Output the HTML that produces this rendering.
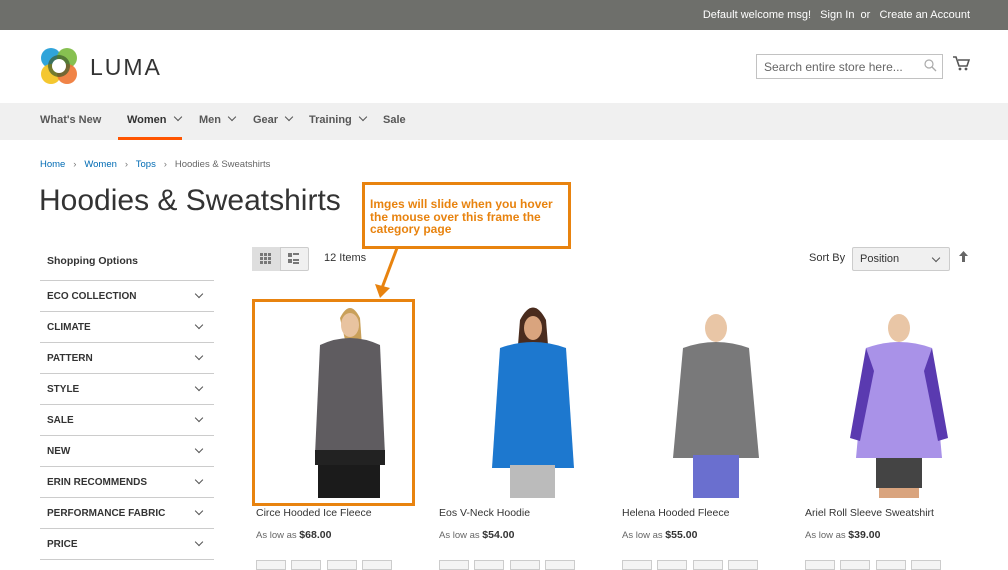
<!DOCTYPE html>
<html><head><meta charset="utf-8"><style>
*{margin:0;padding:0;box-sizing:border-box}
body{width:1008px;height:564px;overflow:hidden;background:#fff;font-family:"Liberation Sans",sans-serif;color:#333;position:relative}
.a{position:absolute;white-space:nowrap}
.top{left:0;top:0;width:1008px;height:30px;background:#6e6f6b}
.nav{left:0;top:103px;width:1008px;height:37px;background:#f0f0f0}
.nv{top:114px;font-size:11px;font-weight:bold;color:#575757}
.chev{display:inline-block;width:6px;height:6px;border-right:1.3px solid #555;border-bottom:1.3px solid #555;transform:rotate(45deg);margin-left:8px;position:relative;top:-3px}
.fl{left:40px;width:174px;height:31px;border-top:1px solid #ccc;font-size:10px;font-weight:bold;padding:10px 0 0 7px;color:#333}
.fl .chev{position:absolute;right:12px;top:10px}
.pn{font-size:10.5px;color:#333}
.pr{font-size:9.5px;color:#666}
.pr b{font-size:10.5px;color:#333}
.sw{top:560px;width:30px;height:10px;border:1px solid #ccc;background:#f4f4f4}
</style></head><body>
<div class="a top"></div>
<div class="a" style="right:38px;top:9px;font-size:11px;color:#fff">Default welcome msg! &nbsp;&nbsp;Sign In &nbsp;or &nbsp;&nbsp;Create an Account</div>
<svg class="a" style="left:40px;top:47px" width="38" height="38" viewBox="0 0 38 38">
<circle cx="11" cy="11" r="10" fill="#1a9ad6" opacity=".9"/><circle cx="27" cy="11" r="10" fill="#7ab93e" opacity=".9"/>
<circle cx="11" cy="27" r="10" fill="#f3c11a" opacity=".9"/><circle cx="27" cy="27" r="10" fill="#ee7633" opacity=".9"/>
<circle cx="19" cy="19" r="11" fill="#3e5b2c" opacity=".7"/><circle cx="19" cy="19" r="7" fill="#fff"/></svg>
<div class="a" style="left:90px;top:54px;font-size:23px;letter-spacing:2px;color:#333">LUMA</div>
<div class="a" style="left:756px;top:54px;width:187px;height:25px;border:1px solid #c2c2c2;font-size:12px;color:#666;padding:5px 0 0 7px">Search entire store here...</div>
<svg class="a" style="left:924px;top:59px" width="13" height="13"><circle cx="5" cy="5" r="4" stroke="#aaa" fill="none" stroke-width="1.2"/><line x1="8" y1="8" x2="12" y2="12" stroke="#aaa" stroke-width="1.3"/></svg>
<svg class="a" style="left:953px;top:56px" width="17" height="15" viewBox="0 0 17 15"><path d="M0 1h3l3 9h8l2-6H5" stroke="#555" fill="none" stroke-width="1.6"/><circle cx="7" cy="13" r="1.4" fill="#555"/><circle cx="13" cy="13" r="1.4" fill="#555"/></svg>
<div class="a nav"></div>
<div class="a nv" style="left:40px">What's New</div>
<div class="a nv" style="left:127px;color:#333">Women<span class="chev"></span></div>
<div class="a" style="left:118px;top:137px;width:64px;height:3px;background:#ff5501"></div>
<div class="a nv" style="left:199px">Men<span class="chev"></span></div>
<div class="a nv" style="left:253px">Gear<span class="chev"></span></div>
<div class="a nv" style="left:309px">Training<span class="chev"></span></div>
<div class="a nv" style="left:383px">Sale</div>
<div class="a" style="left:40px;top:159px;font-size:9.5px;color:#006bb4">Home &nbsp;&nbsp;<span style="color:#777">›</span>&nbsp;&nbsp; Women &nbsp;&nbsp;<span style="color:#777">›</span>&nbsp;&nbsp; Tops &nbsp;&nbsp;<span style="color:#777">›</span>&nbsp;&nbsp; <span style="color:#666">Hoodies &amp; Sweatshirts</span></div>
<div class="a" style="left:39px;top:184px;font-size:30px;color:#333;font-weight:300">Hoodies &amp; Sweatshirts</div>
<div class="a" style="left:362px;top:182px;width:209px;height:67px;border:3px solid #e8830f;background:#fff"></div>
<div class="a" style="left:370px;top:198px;font-size:12px;font-weight:bold;color:#e8830f;line-height:12.5px;white-space:normal;width:195px">Imges will slide when you hover the mouse over this frame the category page</div>
<svg class="a" style="left:370px;top:248px" width="35" height="52"><line x1="27" y1="0" x2="12" y2="40" stroke="#e8830f" stroke-width="3"/><path d="M5 36 L10 50 L20 40 Z" fill="#e8830f"/></svg>
<div class="a" style="left:47px;top:255px;font-size:10.5px;font-weight:bold">Shopping Options</div>
<div class="a fl" style="top:280px">ECO COLLECTION<span class="chev"></span></div>
<div class="a fl" style="top:311px">CLIMATE<span class="chev"></span></div>
<div class="a fl" style="top:342px">PATTERN<span class="chev"></span></div>
<div class="a fl" style="top:373px">STYLE<span class="chev"></span></div>
<div class="a fl" style="top:404px">SALE<span class="chev"></span></div>
<div class="a fl" style="top:435px">NEW<span class="chev"></span></div>
<div class="a fl" style="top:466px">ERIN RECOMMENDS<span class="chev"></span></div>
<div class="a fl" style="top:497px">PERFORMANCE FABRIC<span class="chev"></span></div>
<div class="a fl" style="top:528px;height:32px;border-bottom:1px solid #ccc">PRICE<span class="chev"></span></div>
<div class="a" style="left:252px;top:247px;width:57px;height:24px;border:1px solid #ccc;background:#f0f0f0;border-radius:2px"></div>
<div class="a" style="left:252px;top:247px;width:29px;height:24px;background:#dedede;border-right:1px solid #ccc"></div>
<svg class="a" style="left:260px;top:253px" width="40" height="12"><g fill="#777"><rect x="0" y="0" width="3" height="3"/><rect x="4" y="0" width="3" height="3"/><rect x="8" y="0" width="3" height="3"/><rect x="0" y="4" width="3" height="3"/><rect x="4" y="4" width="3" height="3"/><rect x="8" y="4" width="3" height="3"/><rect x="0" y="8" width="3" height="3"/><rect x="4" y="8" width="3" height="3"/><rect x="8" y="8" width="3" height="3"/><rect x="28" y="0" width="4" height="4"/><rect x="33" y="0" width="6" height="2"/><rect x="28" y="6" width="4" height="4"/><rect x="33" y="6" width="6" height="2"/><rect x="33" y="9" width="6" height="2"/></g></svg>
<div class="a" style="left:324px;top:252px;font-size:11px">12 Items</div>
<div class="a" style="left:809px;top:252px;font-size:11px">Sort By</div>
<div class="a" style="left:852px;top:247px;width:98px;height:24px;border:1px solid #ccc;background:#f0f0f0;font-size:11px;padding:5px 0 0 7px;border-radius:2px">Position<span class="chev" style="position:absolute;right:10px;top:7px"></span></div>
<svg class="a" style="left:958px;top:251px" width="11" height="12"><path d="M5.5 0L10 5H7v6H4V5H1z" fill="#666"/></svg>
<svg class="a" style="left:255px;top:300px" width="720" height="200">
<g><path d="M85 18q10-20 20 0l5 70-8 4z" fill="#c9a05a"/><ellipse cx="95" cy="25" rx="9" ry="12" fill="#e8c3a0"/><path d="M65 45q30-14 60 0l5 110-70 0z" fill="#5f5c60"/><rect x="60" y="150" width="70" height="15" fill="#222"/><rect x="63" y="165" width="62" height="33" fill="#1b1b1b"/></g>
<g transform="translate(183,0)"><path d="M82 20q13-25 26 0l2 25h-30z" fill="#4a2c1e"/><ellipse cx="95" cy="28" rx="9" ry="12" fill="#d9a47e"/><path d="M62 48q33-12 66 0l8 120-82 0z" fill="#1d78cf"/><rect x="72" y="165" width="45" height="33" fill="#bbb"/></g>
<g transform="translate(366,0)"><ellipse cx="95" cy="28" rx="11" ry="14" fill="#e9c6a6"/><path d="M62 48q33-12 66 0l10 110-86 0z" fill="#79797a"/><rect x="72" y="155" width="46" height="43" fill="#6a6fcf"/></g>
<g transform="translate(549,0)"><ellipse cx="95" cy="28" rx="11" ry="14" fill="#e9c6a6"/><path d="M62 48q33-12 66 0l10 110-86 0z" fill="#a992e8"/><path d="M62 48l-16 90 10 3 14-70zM128 48l16 90-10 3-14-70z" fill="#5a3ab0"/><rect x="72" y="158" width="46" height="30" fill="#444"/><rect x="75" y="188" width="40" height="10" fill="#d9a47e"/></g>
</svg>
<div class="a" style="left:252px;top:299px;width:163px;height:207px;border:3px solid #e8830f"></div>
<div class="a pn" style="left:256px;top:507px">Circe Hooded Ice Fleece</div>
<div class="a pn" style="left:439px;top:507px">Eos V-Neck Hoodie</div>
<div class="a pn" style="left:622px;top:507px">Helena Hooded Fleece</div>
<div class="a pn" style="left:805px;top:507px">Ariel Roll Sleeve Sweatshirt</div>
<div class="a pr" style="left:256px;top:529px">As low as <b>$68.00</b></div>
<div class="a pr" style="left:439px;top:529px">As low as <b>$54.00</b></div>
<div class="a pr" style="left:622px;top:529px">As low as <b>$55.00</b></div>
<div class="a pr" style="left:805px;top:529px">As low as <b>$39.00</b></div>
<div class="a sw" style="left:256px"></div><div class="a sw" style="left:291px"></div><div class="a sw" style="left:327px"></div><div class="a sw" style="left:362px"></div>
<div class="a sw" style="left:439px"></div><div class="a sw" style="left:474px"></div><div class="a sw" style="left:510px"></div><div class="a sw" style="left:545px"></div>
<div class="a sw" style="left:622px"></div><div class="a sw" style="left:657px"></div><div class="a sw" style="left:693px"></div><div class="a sw" style="left:728px"></div>
<div class="a sw" style="left:805px"></div><div class="a sw" style="left:840px"></div><div class="a sw" style="left:876px"></div><div class="a sw" style="left:911px"></div>
</body></html>
